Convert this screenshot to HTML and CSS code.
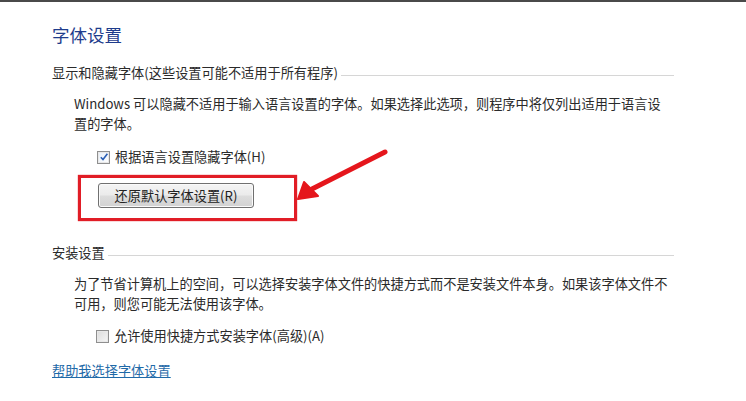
FILE: index.html
```html
<!DOCTYPE html>
<html lang="zh-CN">
<head>
<meta charset="utf-8">
<title>字体设置</title>
<link rel="stylesheet" href="styles.css">
</head>
<body>
<div class="topbar"></div>
<main class="page">
  <h1 class="title">字体设置</h1>

  <div class="group-head">
    <span class="group-label">显示和隐藏字体(这些设置可能不适用于所有程序)</span>
    <span class="group-rule"></span>
  </div>
  <p class="desc">Windows 可以隐藏不适用于输入语言设置的字体。如果选择此选项，则程序中将仅列出适用于语言设置的字体。</p>
  <label class="check-row">
    <span class="box checked">
      <svg viewBox="0 0 10 10" width="10" height="10"><path d="M1.8 5.2 L4 7.6 L8.4 1.8" fill="none" stroke="#2b5fb4" stroke-width="1.6"/></svg>
    </span>
    <span class="check-text">根据语言设置隐藏字体(H)</span>
  </label>
  <div class="highlight">
    <button class="btn" type="button">还原默认字体设置(R)</button>
  </div>

  <div class="group-head group-two">
    <span class="group-label">安装设置</span>
    <span class="group-rule"></span>
  </div>
  <p class="desc">为了节省计算机上的空间，可以选择安装字体文件的快捷方式而不是安装文件本身。如果该字体文件不可用，则您可能无法使用该字体。</p>
  <label class="check-row check-two">
    <span class="box"></span>
    <span class="check-text">允许使用快捷方式安装字体(高级)(A)</span>
  </label>
  <a class="help" href="#">帮助我选择字体设置</a>
</main>
<svg class="arrow" width="746" height="401" viewBox="0 0 746 401">
  <line x1="385" y1="152" x2="312" y2="189" stroke="#e5161c" stroke-width="5" stroke-linecap="round"/>
  <polygon points="298,199 304,182 318,196" fill="#e5161c" stroke="#e5161c" stroke-width="2" stroke-linejoin="round"/>
</svg>
</body>
</html>
```
FILE: styles.css
```css
html, body {
  margin: 0;
  padding: 0;
  background: #fff;
}
body {
  position: relative;
  width: 746px;
  height: 401px;
  overflow: hidden;
  font-family: "Noto Sans CJK SC", "Noto Sans", sans-serif;
  font-size: 13.2px;
  color: #2a2a2a;
}
.topbar {
  height: 2px;
  background: #4a4a4a;
}
.page {
  display: flex;
  flex-direction: column;
  align-items: flex-start;
  padding: 0 72px 0 52px;
}
.title {
  margin: 21px 0 0;
  font-size: 17.5px;
  font-weight: normal;
  line-height: 24px;
  color: #1e3c8c;
}
.group-head {
  display: flex;
  align-self: stretch;
  align-items: center;
  margin-top: 16px;
  height: 20px;
  line-height: 20px;
}
.group-two {
  margin-top: 22px;
}
.group-rule {
  flex: 1;
  height: 0;
  border-top: 1px solid #d6d6d6;
  margin: 5px 0 0 3px;
}
.desc {
  margin: 11px 0 0;
  padding-left: 22px;
  width: 598px;
  line-height: 20px;
}
.check-row {
  display: flex;
  align-items: center;
  gap: 5px;
  margin: 13px 0 0 45px;
  height: 20px;
  line-height: 20px;
}
.check-two {
  margin: 12px 0 0 44px;
}
.box {
  width: 11px;
  height: 11px;
  border: 1px solid #8f8f8f;
  background: linear-gradient(135deg, #dcdcdc, #f6f6f6);
  box-shadow: inset 0 0 0 1px #e8e8e8;
  display: flex;
  align-items: center;
  justify-content: center;
}
.box.checked {
  background: linear-gradient(135deg, #e6eef8, #ffffff);
}
.highlight {
  margin: 8px 0 0 26px;
  border: 3px solid #e11d26;
  padding: 5px 40px 10px 17px;
  box-shadow: 0 0 1px #e11d26;
}
.btn {
  display: block;
  width: 156px;
  height: 25px;
  padding: 0;
  border: 1px solid #707070;
  border-radius: 3px;
  background: linear-gradient(#f4f4f4 0%, #ebebeb 48%, #dddddd 52%, #d2d2d2 100%);
  box-shadow: inset 0 0 0 1px #fafafa;
  font-family: inherit;
  font-size: 13.2px;
  color: #222;
  line-height: 23px;
}
.help {
  margin-top: 15px;
  line-height: 20px;
  color: #1f6aa8;
  text-decoration: underline;
}
.arrow {
  position: absolute;
  left: 0;
  top: 0;
  pointer-events: none;
}
```
